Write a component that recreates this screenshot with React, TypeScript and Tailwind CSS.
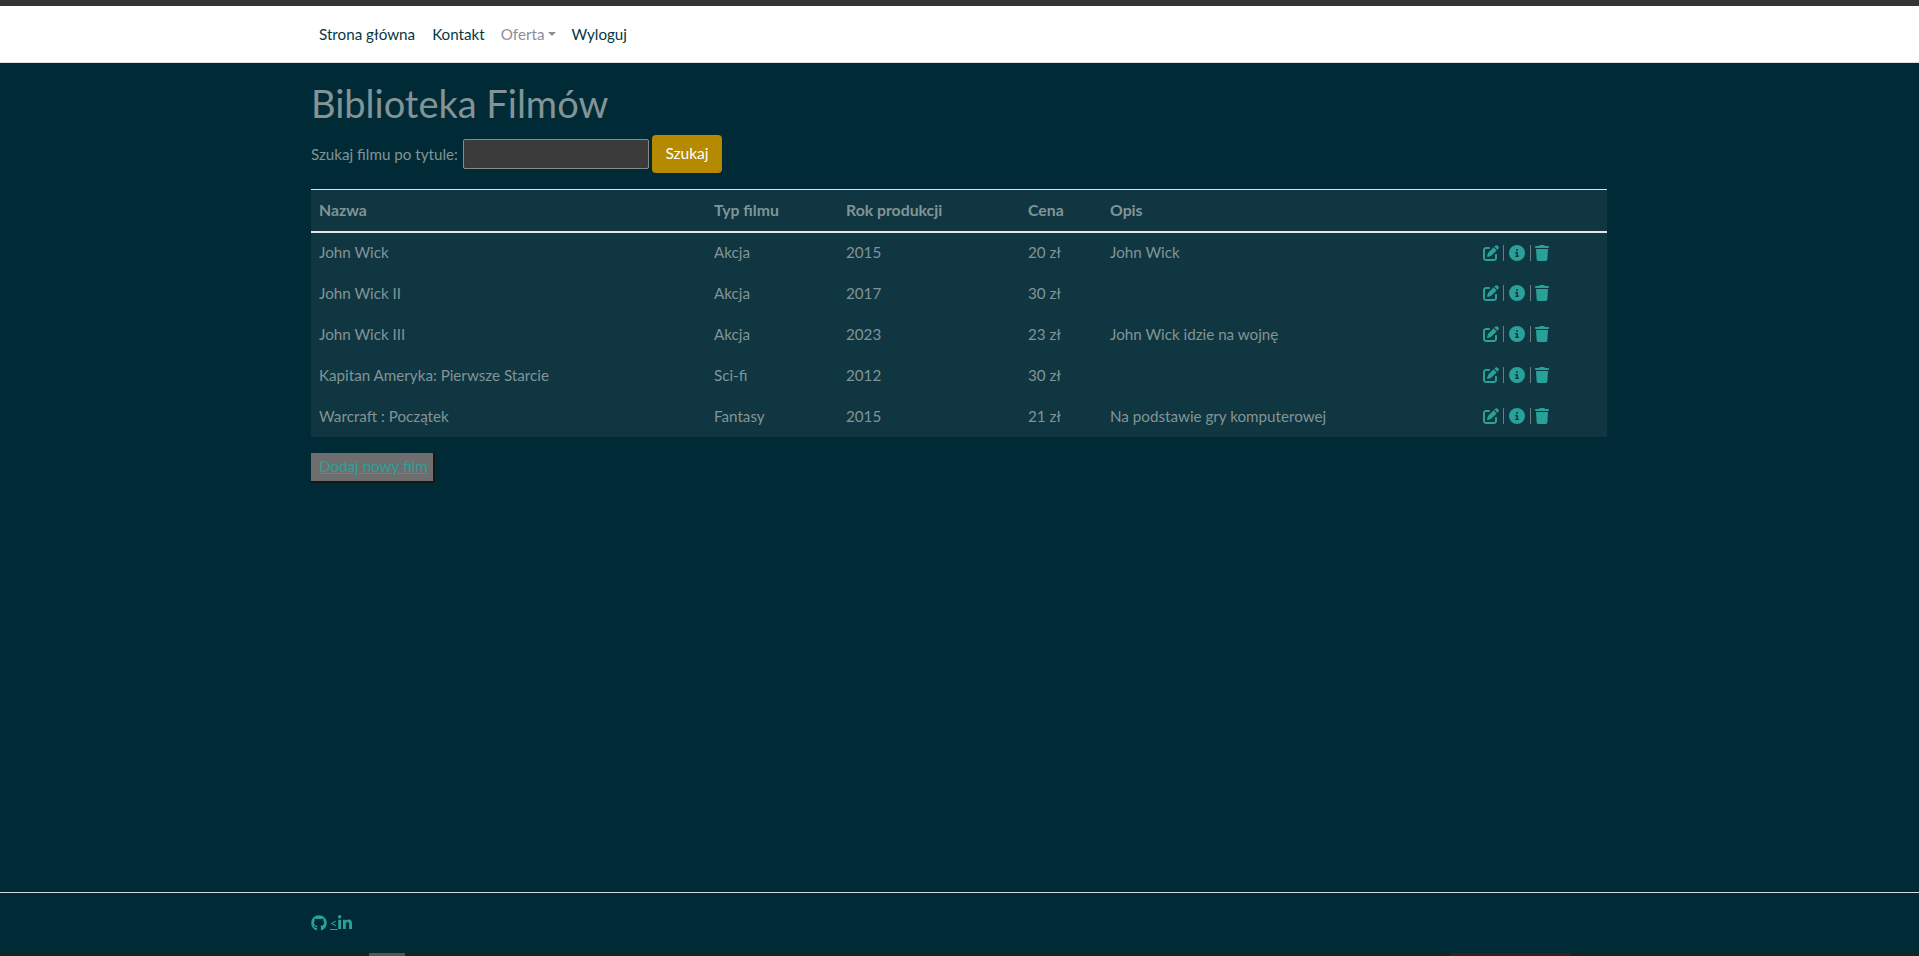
import { FaGithub, FaLinkedinIn } from 'react-icons/fa'
import { FaCircleInfo, FaPenToSquare, FaTrash } from 'react-icons/fa6'

const films = [
  { name: 'John Wick', type: 'Akcja', year: '2015', price: '20 zł', desc: 'John Wick' },
  { name: 'John Wick II', type: 'Akcja', year: '2017', price: '30 zł', desc: '' },
  { name: 'John Wick III', type: 'Akcja', year: '2023', price: '23 zł', desc: 'John Wick idzie na wojnę' },
  { name: 'Kapitan Ameryka: Pierwsze Starcie', type: 'Sci-fi', year: '2012', price: '30 zł', desc: '' },
  { name: 'Warcraft : Początek', type: 'Fantasy', year: '2015', price: '21 zł', desc: 'Na podstawie gry komputerowej' },
]

export default function App() {
  return (
    <div className="flex flex-col h-[956px] overflow-hidden bg-[#002b36] font-['Lato',sans-serif] text-[15.2px] text-[#839496]">
      <div className="h-[6px] bg-[#343434]" />

      {/* Navbar */}
      <nav className="h-[57px] bg-white border-b border-[#dee2e6]">
        <div className="w-[1296px] ml-[311px] flex items-center h-full pt-[1px] text-[#073642]">
          <a className="px-2">Strona główna</a>
          <a className="pl-[9px] pr-2">Kontakt</a>
          <a className="px-2 flex items-center gap-1 text-[#8b8f98]">
            Oferta
            <span className="w-0 h-0 border-x-[4px] border-x-transparent border-t-[4px] border-t-[#8b8f98]" />
          </a>
          <a className="pl-[7px] pr-2">Wyloguj</a>
        </div>
      </nav>

      <main className="flex-1 w-[1296px] ml-[311px]">
        <h1 className="mt-[16px] text-[38px] leading-[48px] font-normal">Biblioteka Filmów</h1>

        <form className="flex items-center mt-[8px] h-[38px]">
          <label className="w-[152px]">Szukaj filmu po tytule:</label>
          <input className="w-[186px] h-[30px] bg-[#3b3b3b] border border-[#8a8a8a] rounded-[2px]" />
          <button type="button" className="ml-[3px] h-[38px] w-[70px] bg-[#b58900] text-white text-[15.5px] rounded-[4px]">Szukaj</button>
        </form>

        <table className="mt-[16px] w-full table-fixed border-collapse bg-[#0f3641]">
          <colgroup>
            <col className="w-[395px]" />
            <col className="w-[132px]" />
            <col className="w-[182px]" />
            <col className="w-[82px]" />
            <col className="w-[372px]" />
            <col />
          </colgroup>
          <thead>
            <tr className="h-[42px] border-t border-b-2 border-t-[#d5e5e5] border-b-[#e5e5e5] text-left text-[15.8px]">
              <th className="px-2 font-bold">Nazwa</th>
              <th className="px-2 font-bold">Typ filmu</th>
              <th className="px-2 font-bold">Rok produkcji</th>
              <th className="px-2 font-bold">Cena</th>
              <th className="px-2 font-bold">Opis</th>
              <th />
            </tr>
          </thead>
          <tbody>
            {films.map((f) => (
              <tr key={f.name} className="h-[41px]">
                <td className="px-2">{f.name}</td>
                <td className="px-2">{f.type}</td>
                <td className="px-2">{f.year}</td>
                <td className="px-2">{f.price}</td>
                <td className="px-2">{f.desc}</td>
                <td className="px-2">
                  <div className="flex items-center text-[#2aa198]">
                    <FaPenToSquare className="ml-[1px] w-4 h-4" />
                    <span className="ml-[4px] w-px h-4 bg-[#6b7f78]" />
                    <FaCircleInfo className="ml-[5px] w-4 h-4" />
                    <span className="ml-[5px] w-px h-4 bg-[#6b7f78]" />
                    <FaTrash className="ml-[4px] w-[14px] h-4" />
                  </div>
                </td>
              </tr>
            ))}
          </tbody>
        </table>

        <div className="mt-[16px] w-[124px] h-[30px] pl-2 flex items-center whitespace-nowrap bg-[#6e6e6e] border-r-2 border-b-2 border-r-[#161616] border-b-[#161616] text-[#2aa198] underline">
          Dodaj nowy film
        </div>
      </main>

      {/* Footer */}
      <footer className="h-[61px] border-t border-[#d5dcdc]">
        <div className="w-[1296px] ml-[311px] mt-[22px] flex items-center text-[#2aa198]">
          <FaGithub className="w-4 h-4" />
          <span className="ml-[3px] w-2 text-[13px] leading-[14px] underline">&lt;</span>
          <FaLinkedinIn className="w-[14px] h-4" />
        </div>
      </footer>

      {/* Taskbar peeking in at the bottom edge */}
      <div className="flex h-[3px] bg-[#1f1f1c]">
        <span className="ml-[369px] w-[36px] bg-[#555552]" />
        <span className="ml-[1045px] w-[120px] bg-[#3a1f1f]" />
      </div>
    </div>
  )
}
